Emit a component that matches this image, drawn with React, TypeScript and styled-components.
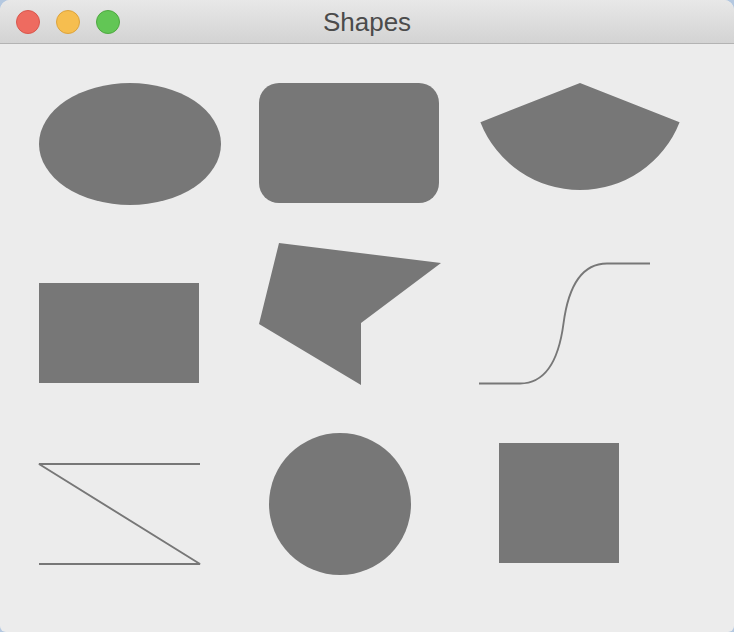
import React from "react";
import styled, { createGlobalStyle } from "styled-components";

const Global = createGlobalStyle`
  html, body { margin: 0; padding: 0; background: #b4c8e0; }
  body { width: 734px; height: 632px; overflow: hidden; }
`;

const Window = styled.div`
  width: 734px;
  height: 632px;
  border-radius: 10px 10px 6px 6px;
  overflow: hidden;
  background: #ececec;
  display: flex;
  flex-direction: column;
`;

const TitleBar = styled.div`
  height: 43px;
  flex: none;
  position: relative;
  display: flex;
  align-items: center;
  justify-content: center;
  background: linear-gradient(#e8e8e8, #d3d3d3);
  border-bottom: 1px solid #b3b3b3;
`;

const Lights = styled.div`
  position: absolute;
  left: 16px;
  top: 10px;
  display: flex;
  gap: 16px;
`;

const Light = styled.span<{ $fill: string; $edge: string }>`
  width: 22px;
  height: 22px;
  border-radius: 50%;
  background: ${(p) => p.$fill};
  border: 1px solid ${(p) => p.$edge};
`;

const Title = styled.div`
  font-family: "Liberation Sans", Arial, sans-serif;
  font-size: 26px;
  color: #4b4b4b;
  line-height: 1;
  margin-top: 1px;
`;

const Grid = styled.div`
  display: grid;
  grid-template-columns: repeat(3, 220px);
  grid-template-rows: repeat(3, 180px);
  padding: 19px 0 0 19px;
`;

const Cell = styled.svg`
  width: 220px;
  height: 180px;
  overflow: visible;
  display: block;
`;

const FILL = "#777777";

const Solid = { fill: FILL } as const;
const Line = {
  fill: "none",
  stroke: FILL,
  strokeWidth: 1.9,
  strokeLinejoin: "bevel",
} as const;

export default function App() {
  return (
    <>
      <Global />
      <Window>
        <TitleBar>
          <Lights>
            <Light $fill="#ee6b60" $edge="#d8574d" />
            <Light $fill="#f6be4f" $edge="#dca33d" />
            <Light $fill="#62c655" $edge="#4fa841" />
          </Lights>
          <Title>Shapes</Title>
        </TitleBar>
        <Grid>
          <Cell viewBox="0 0 220 180">
            <ellipse cx="111" cy="81" rx="91" ry="61" {...Solid} />
          </Cell>
          <Cell viewBox="0 0 220 180">
            <rect x="20" y="20" width="180" height="120" rx="20" ry="20" {...Solid} />
          </Cell>
          <Cell viewBox="0 0 220 180">
            <path d="M121,20 L21.4,59.2 A107,107 0 0 0 220.6,59.2 Z" {...Solid} />
          </Cell>

          <Cell viewBox="0 0 220 180">
            <rect x="20" y="40" width="160" height="100" {...Solid} />
          </Cell>
          <Cell viewBox="0 0 220 180">
            <polygon points="40,0 202,20 122,80 122,142 20,81" {...Solid} />
          </Cell>
          <Cell viewBox="0 0 220 180">
            <path
              d="M20,140.5 H61 C91,140.5 101,107 104.5,80.5 C108,54 118,20.5 148,20.5 H191"
              {...Line}
            />
          </Cell>

          <Cell viewBox="0 0 220 180">
            <polyline points="181,41 20,41 181,141 20,141" {...Line} />
          </Cell>
          <Cell viewBox="0 0 220 180">
            <circle cx="101" cy="81" r="71" {...Solid} />
          </Cell>
          <Cell viewBox="0 0 220 180">
            <rect x="40" y="20" width="120" height="120" {...Solid} />
          </Cell>
        </Grid>
      </Window>
    </>
  );
}
